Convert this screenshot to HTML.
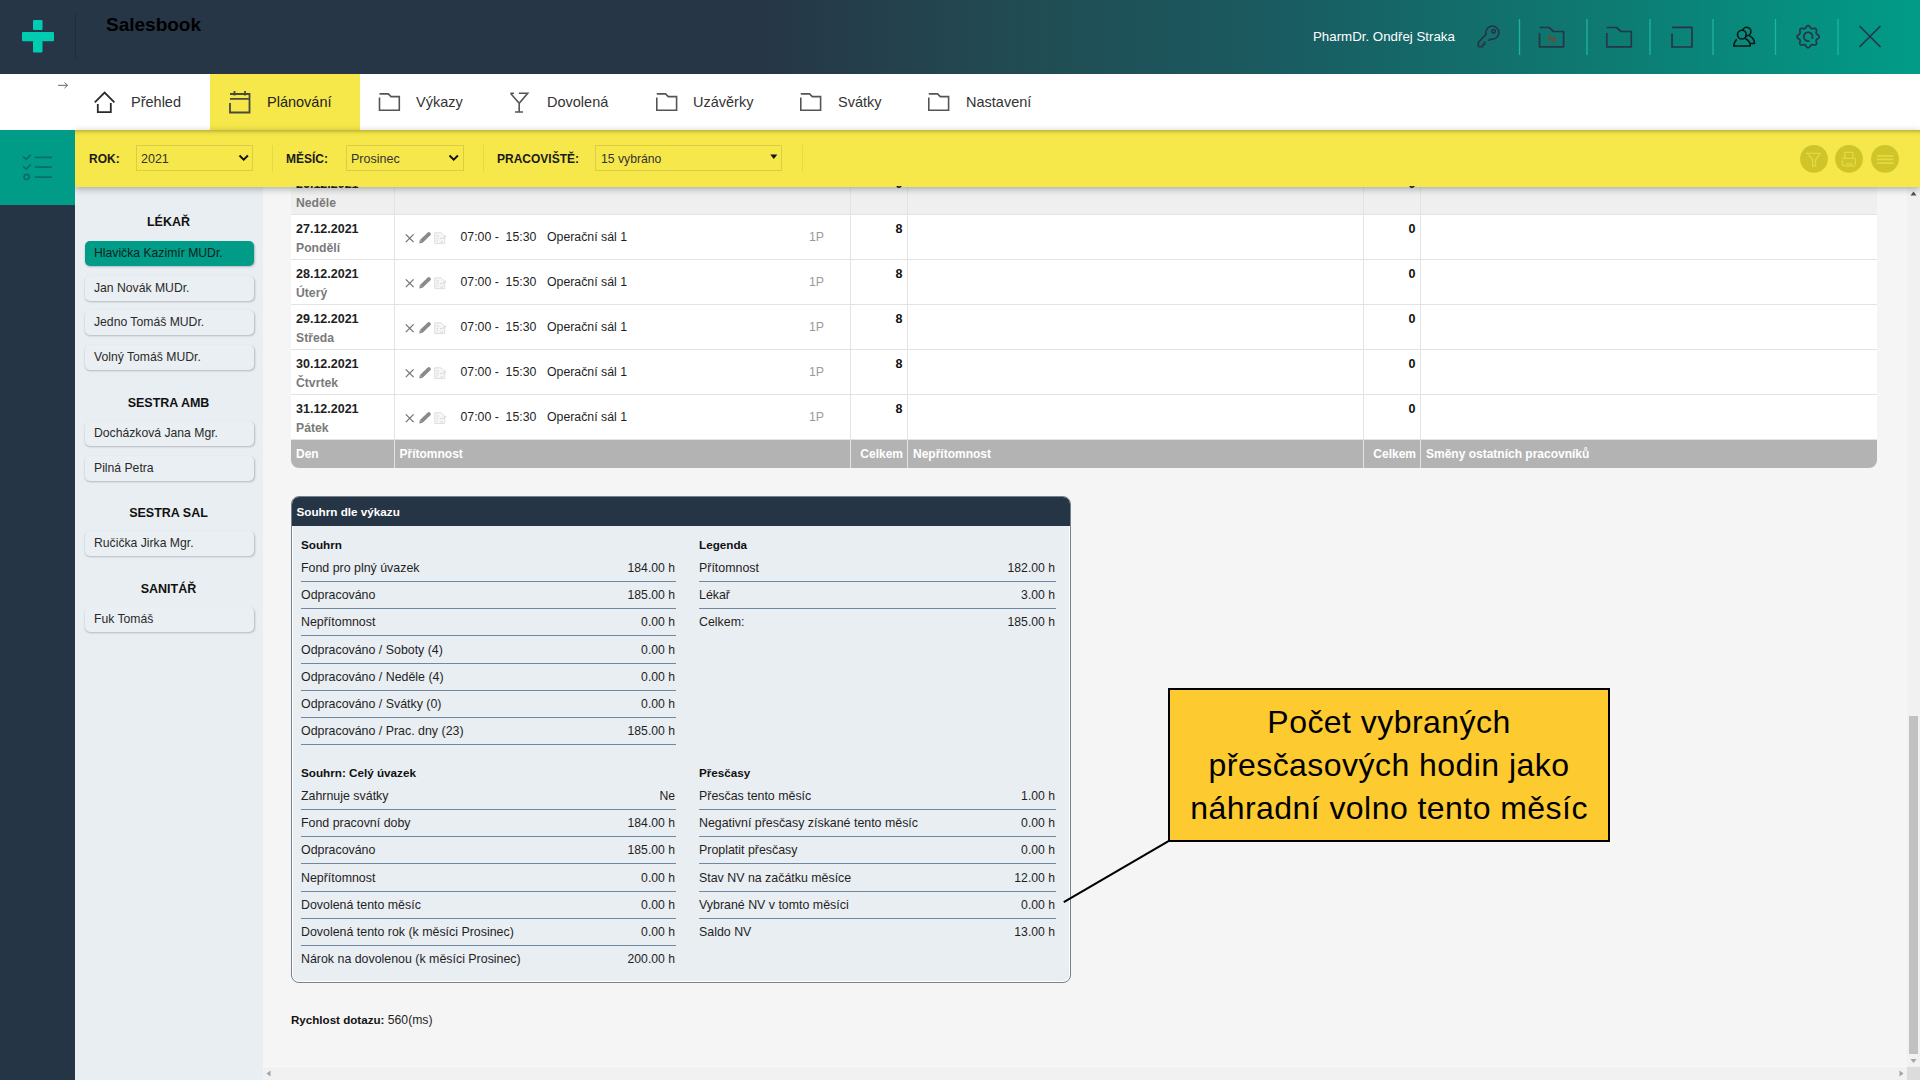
<!DOCTYPE html>
<html><head><meta charset="utf-8">
<style>
*{box-sizing:border-box;margin:0;padding:0}
html,body{width:1920px;height:1080px;overflow:hidden;background:#f5f5f5;font-family:"Liberation Sans",sans-serif;color:#222}
.abs{position:absolute}
#hdr{left:0;top:0;width:1920px;height:74px;background:linear-gradient(90deg,#263646 0%,#263646 39.6%,#224a52 52.1%,#195d62 67.7%,#0e7a72 83.3%,#019c88 100%)}
#nav{left:0;top:74px;width:1920px;height:56px;background:#fff}
#tb{left:75px;top:130px;width:1845px;height:57px;background:#f6e84a;box-shadow:0 2px 7px rgba(0,0,0,.3);z-index:5}
#teal{left:0;top:130px;width:75px;height:75px;background:#009c87;z-index:6}
#sdark{left:0;top:205px;width:75px;height:875px;background:#253545}
#slight{left:75px;top:187px;width:188px;height:893px;background:#e9eef2}
#content{left:263px;top:187px;width:1644px;height:880px;background:#f5f5f5}
.txt{position:absolute;white-space:nowrap}
.sh{position:absolute;left:75px;width:187px;text-align:center;font-size:12.5px;font-weight:bold;color:#111;line-height:16px}
.si{position:absolute;left:85px;width:169px;height:25px;border-radius:5px;background:#eaeff3;box-shadow:0.5px 1px 2px rgba(0,0,0,.22);font-size:12.2px;color:#2a2a2a;line-height:25px;padding-left:9px;white-space:nowrap}

.row{position:absolute;left:291px;width:1586px;height:45px;background:#fff;border-bottom:1px solid #e3e3e3}
.row.we{background:#efefef}
.vl{position:absolute;width:1px;background:#e3e3e3}
.dt{position:absolute;left:296px;font-size:12.5px;font-weight:bold;color:#1e1e1e;line-height:14px;white-space:nowrap}
.dn{position:absolute;left:296px;font-size:12.2px;font-weight:bold;color:#7a7a7a;line-height:14px;white-space:nowrap}
.tm{position:absolute;left:460.5px;font-size:12.3px;color:#1e1e1e;line-height:14px;white-space:pre}
.op{position:absolute;left:547px;font-size:12.3px;color:#1e1e1e;line-height:14px;white-space:nowrap}
.p1{position:absolute;left:809px;font-size:12.3px;color:#9a9a9a;line-height:14px}
.n8{position:absolute;width:40px;text-align:right;font-size:12.5px;font-weight:bold;color:#111;line-height:14px}
.ft{position:absolute;top:447px;font-size:12px;font-weight:bold;color:#fff;line-height:14px;white-space:nowrap}

.sbox{position:absolute;left:290.5px;top:496px;width:780px;height:486.5px;border:1.5px solid #75818c;border-radius:8px;background:#e9eef3;overflow:hidden;box-shadow:inset 0 0 0 1px #fff}
.shd{position:absolute;left:0;top:0;width:100%;height:29px;background:#263545}
.sl{position:absolute;font-size:12.4px;color:#1f1f1f;line-height:14px;white-space:nowrap}
.sv{position:absolute;font-size:12.2px;color:#1f1f1f;line-height:14px;white-space:nowrap;text-align:right;width:100px}
.sb{position:absolute;font-size:11.7px;font-weight:bold;color:#111;line-height:14px;white-space:nowrap}
.hl{position:absolute;height:1px;background:#7089a3}
.si.act{background:#009c87;color:#0c1f1c}

</style></head><body>
<div id="hdr" class="abs"></div>
<div id="nav" class="abs"></div>
<!-- header -->
<svg class="abs" style="left:0;top:0" width="75" height="74">
 <rect x="33" y="20" width="9.5" height="10" rx="1" fill="#00ccb2"/>
 <rect x="22" y="32" width="32" height="9.3" rx="1" fill="#00ccb2"/>
 <rect x="33" y="41" width="9.5" height="11.5" rx="1" fill="#00ccb2"/>
</svg>
<div class="abs" style="left:75px;top:13px;width:1px;height:47px;background:#1f2d3a"></div>
<div class="txt" style="left:106px;top:13px;font-size:19px;font-weight:bold;color:#000;line-height:24px">Salesbook</div>
<div class="txt" style="left:1313px;top:28px;font-size:13.3px;color:#fff;line-height:18px">PharmDr. Ondřej Straka</div>
<svg class="abs" style="left:1460px;top:0" width="460" height="74" fill="none" stroke="#263646" stroke-width="1.7" stroke-linecap="round" stroke-linejoin="round">
 <path d="M26.1 34.3 A6.5 6.5 0 1 1 31.3 39.0 L28.8 40.2"/>
 <circle cx="33.5" cy="31.2" r="1.7"/>
 <path d="M25.9 34.4 L18.3 42.4 L18.3 45.9 Q18.5 46.6 19.5 46.6 L22.6 46.6 L23 44.5 L24.6 44.3 L24.6 42"/>
 <g stroke="#1cb5a0" stroke-width="1.3" stroke-linecap="butt"><path d="M59.5 19V55M127 19V55M190 19V55M253 19V55M315.5 19V55M378 19V55"/></g>
 <path d="M79.5 27.5H89L93.5 31.5H103.6V46.8H79.5V33" stroke-linecap="butt"/>
 <path d="M89.6 41.7V35.9L94.3 41.7V35.9" stroke="#6e4a30" stroke-width="1.5" stroke-linejoin="miter"/>
 <path d="M146.8 27.5H156.5L161 31.5H171.3V46.8H146.8V33" stroke-linecap="butt"/>
 <path d="M212 27.3H232V47H212V33.5" stroke-linecap="butt"/>
 <g stroke="#0a1716" stroke-width="1.6">
  <circle cx="281.9" cy="34.6" r="4.4"/>
  <path d="M282.69 30.27 A4.2 4.2 0 1 1 286.17 35.67"/>
  <path d="M276.3 39.8 C274.5 41.5 273.8 43.5 273.8 46 L290.3 46 C290.3 42.5 288 40 285.7 38.8"/>
  <path d="M289.6 35.9 C292.5 37.5 294.5 40 294.5 43.5 L290.5 43.5"/>
 </g>
 <path d="M348.15 25.65 L348.58 25.71 L349.00 25.90 L349.39 26.20 L349.75 26.57 L350.08 26.99 L350.38 27.42 L350.65 27.82 L350.92 28.17 L351.20 28.44 L351.50 28.62 L351.84 28.70 L352.22 28.71 L352.66 28.65 L353.14 28.56 L353.65 28.47 L354.18 28.40 L354.70 28.39 L355.18 28.46 L355.61 28.63 L355.96 28.89 L356.22 29.24 L356.39 29.67 L356.46 30.15 L356.45 30.67 L356.38 31.20 L356.29 31.71 L356.20 32.19 L356.14 32.63 L356.15 33.01 L356.23 33.35 L356.41 33.65 L356.68 33.93 L357.03 34.20 L357.43 34.47 L357.86 34.77 L358.28 35.10 L358.65 35.46 L358.95 35.85 L359.14 36.27 L359.20 36.70 L359.14 37.13 L358.95 37.55 L358.65 37.94 L358.28 38.30 L357.86 38.63 L357.43 38.93 L357.03 39.20 L356.68 39.47 L356.41 39.75 L356.23 40.05 L356.15 40.39 L356.14 40.77 L356.20 41.21 L356.29 41.69 L356.38 42.20 L356.45 42.73 L356.46 43.25 L356.39 43.73 L356.22 44.16 L355.96 44.51 L355.61 44.77 L355.18 44.94 L354.70 45.01 L354.18 45.00 L353.65 44.93 L353.14 44.84 L352.66 44.75 L352.22 44.69 L351.84 44.70 L351.50 44.78 L351.20 44.96 L350.92 45.23 L350.65 45.58 L350.38 45.98 L350.08 46.41 L349.75 46.83 L349.39 47.20 L349.00 47.50 L348.58 47.69 L348.15 47.75 L347.72 47.69 L347.30 47.50 L346.91 47.20 L346.55 46.83 L346.22 46.41 L345.92 45.98 L345.65 45.58 L345.38 45.23 L345.10 44.96 L344.80 44.78 L344.46 44.70 L344.08 44.69 L343.64 44.75 L343.16 44.84 L342.65 44.93 L342.12 45.00 L341.60 45.01 L341.12 44.94 L340.69 44.77 L340.34 44.51 L340.08 44.16 L339.91 43.73 L339.84 43.25 L339.85 42.73 L339.92 42.20 L340.01 41.69 L340.10 41.21 L340.16 40.77 L340.15 40.39 L340.07 40.05 L339.89 39.75 L339.62 39.47 L339.27 39.20 L338.87 38.93 L338.44 38.63 L338.02 38.30 L337.65 37.94 L337.35 37.55 L337.16 37.13 L337.10 36.70 L337.16 36.27 L337.35 35.85 L337.65 35.46 L338.02 35.10 L338.44 34.77 L338.87 34.47 L339.27 34.20 L339.62 33.93 L339.89 33.65 L340.07 33.35 L340.15 33.01 L340.16 32.63 L340.10 32.19 L340.01 31.71 L339.92 31.20 L339.85 30.67 L339.84 30.15 L339.91 29.67 L340.08 29.24 L340.34 28.89 L340.69 28.63 L341.12 28.46 L341.60 28.39 L342.12 28.40 L342.65 28.47 L343.16 28.56 L343.64 28.65 L344.08 28.71 L344.46 28.70 L344.80 28.62 L345.10 28.44 L345.38 28.17 L345.65 27.82 L345.92 27.42 L346.22 26.99 L346.55 26.57 L346.91 26.20 L347.30 25.90 L347.72 25.71 L348.15 25.65Z"/>
 <path d="M352.3 38.2 A4.4 4.4 0 1 0 348.9 41.0"/>
 <path d="M400 26.5 L420 46.5 M420 26.5 L400 46.5"/>
</svg>


<!-- nav -->
<div class="abs" style="left:210px;top:74px;width:150px;height:56px;background:#f6e84a"></div>
<svg class="abs" style="left:0;top:74px" width="1100" height="56" fill="none" stroke-linecap="butt" stroke-linejoin="miter">
 <path d="M58 11.3H67.5M64.5 8.5L67.6 11.3L64.5 14.1" stroke="#666" stroke-width="1"/>
 <g stroke="#2a2a2a" stroke-width="1.8">
  <path d="M94.8 28.3L104.6 18.6L114.4 28.3M110.8 29V38.2H97.8V30"/>
 </g>
 <g stroke="#4a4a3a" stroke-width="1.8">
  <path d="M230 20H249.5V38.5H230V29M230 24.8H249.5M234.5 17V21.5M245 17V21.5"/>
 </g>
 <g stroke="#555" stroke-width="1.6">
  <path d="M379.5 19.9H388.3L391 22.6H399.3V36.2H379.5V23.5"/>
  <path d="M510.5 19.3H514M518.8 19.3H527.7L519.2 29.2L510.5 19.3M519.2 29.2V37.8M515 38H523"/>
  <path d="M656.8 19.9H665.6L668.3 22.6H676.6V36.2H656.8V23.5"/>
  <path d="M800.8 19.9H809.6L812.3 22.6H820.6V36.2H800.8V23.5"/>
  <path d="M928.8 19.9H937.6L940.3 22.6H948.6V36.2H928.8V23.5"/>
 </g>
</svg>
<div class="txt" style="left:131px;top:93px;font-size:14.5px;color:#333;line-height:18px">Přehled</div>
<div class="txt" style="left:267px;top:93px;font-size:14.5px;color:#222;line-height:18px">Plánování</div>
<div class="txt" style="left:416px;top:93px;font-size:14.5px;color:#333;line-height:18px">Výkazy</div>
<div class="txt" style="left:547px;top:93px;font-size:14.5px;color:#333;line-height:18px">Dovolená</div>
<div class="txt" style="left:693px;top:93px;font-size:14.5px;color:#333;line-height:18px">Uzávěrky</div>
<div class="txt" style="left:838px;top:93px;font-size:14.5px;color:#333;line-height:18px">Svátky</div>
<div class="txt" style="left:966px;top:93px;font-size:14.5px;color:#333;line-height:18px">Nastavení</div>
<div id="tb" class="abs"></div>
<div id="teal" class="abs"></div>

<!-- toolbar -->
<svg class="abs" style="left:0;top:130px;z-index:7" width="75" height="75" fill="none" stroke="#0c6d65" stroke-width="1.7" stroke-linecap="round" stroke-linejoin="round">
 <path d="M23.75 27.1L26.25 29.4L30.4 25.2M23.75 36.9L26.25 39.2L30.4 35M35.6 27.3H51.3M35.6 37.1H51.3M35.6 47.1H51.3"/>
 <circle cx="26.7" cy="46.9" r="2.6"/>
</svg>
<div class="abs" style="left:75px;top:130px;width:1845px;height:57px;z-index:7">
 <div class="txt" style="left:14px;top:21px;font-size:12px;font-weight:bold;color:#1a1a1a;line-height:16px">ROK:</div>
 <div class="abs" style="left:61px;top:15px;width:117px;height:26px;border:1px solid #d9ce45"></div>
 <div class="txt" style="left:66px;top:21px;font-size:12.5px;color:#333;line-height:16px">2021</div>
 <svg class="abs" style="left:163px;top:24px" width="12" height="8" fill="none" stroke="#111" stroke-width="1.9"><path d="M1.5 1.5L5.7 5.7L9.9 1.5"/></svg>
 <div class="abs" style="left:197px;top:15px;width:1px;height:27px;background:#e6d946"></div>
 <div class="txt" style="left:211px;top:21px;font-size:12px;font-weight:bold;color:#1a1a1a;line-height:16px">MĚSÍC:</div>
 <div class="abs" style="left:271px;top:15px;width:118px;height:26px;border:1px solid #d9ce45"></div>
 <div class="txt" style="left:276px;top:21px;font-size:12.5px;color:#333;line-height:16px">Prosinec</div>
 <svg class="abs" style="left:373px;top:24px" width="12" height="8" fill="none" stroke="#111" stroke-width="1.9"><path d="M1.5 1.5L5.7 5.7L9.9 1.5"/></svg>
 <div class="abs" style="left:408px;top:15px;width:1px;height:27px;background:#e6d946"></div>
 <div class="txt" style="left:422px;top:21px;font-size:12px;font-weight:bold;color:#1a1a1a;line-height:16px">PRACOVIŠTĚ:</div>
 <div class="abs" style="left:520px;top:15px;width:187px;height:26px;border:1px solid #d9ce45"></div>
 <div class="txt" style="left:526px;top:21px;font-size:12.2px;color:#333;line-height:16px">15 vybráno</div>
 <svg class="abs" style="left:695px;top:24px" width="8" height="6"><path d="M0.3 0.5H7.3L3.8 5Z" fill="#111"/></svg>
 <div class="abs" style="left:727px;top:15px;width:1px;height:27px;background:#e6d946"></div>
</div>
<svg class="abs" style="left:1790px;top:130px;z-index:7" width="130" height="57">
 <g fill="#cfc42a"><circle cx="24" cy="28.9" r="13.9"/><circle cx="59" cy="28.9" r="13.9"/><circle cx="95" cy="28.9" r="13.9"/></g>
 <g fill="none" stroke="#e4da3e" stroke-width="1.3" stroke-linejoin="round" stroke-linecap="round">
  <path d="M16.5 23.4H30.4L25.6 29.5V35.4L22.6 36.6V29.5L18.7 25"/>
  <path d="M54.8 28.5V22.3H62.9V28.5M52.5 28.3H65.4V34.3M52.3 30.6V34.3Q52.3 35.8 55 35.8H64.5M56.2 33.9H62"/>
  <path d="M87 25.9H103.4M87 29.4H103.4M87 33.1H103.4" stroke-linecap="butt" stroke-width="1.7"/>
 </g>
</svg>
<div class="abs" style="left:75px;top:130px;width:1845px;height:6px;background:linear-gradient(rgba(70,60,0,.3),rgba(70,60,0,.08) 50%,rgba(70,60,0,0));z-index:8"></div>
<div id="sdark" class="abs"></div>
<div id="slight" class="abs"></div>
<div id="content" class="abs"></div>

<!-- table -->
<div class="row we" style="top:170px;height:45px"></div>
<div class="abs" style="left:0;top:186px;width:1920px;height:2px;overflow:hidden;z-index:9"><div class="dt" style="top:-9px">26.12.2021</div><div class="n8" style="left:862.5px;top:-9px">0</div><div class="n8" style="left:1375.5px;top:-9px">0</div></div>
<div class="dn" style="top:196px">Neděle</div>

<div class="row" style="top:215px"></div>
<div class="dt" style="top:222px">27.12.2021</div>
<div class="dn" style="top:241px">Pondělí</div>
<svg class="abs" style="left:403px;top:232px" width="46" height="14" fill="none">
 <path d="M2.8 2.4L10.6 10.1M10.6 2.4L2.8 10.1" stroke="#747474" stroke-width="1.3"/>
 <path d="M18.3 9.4L23.7 4.15" stroke="#8a8a8a" stroke-width="3.9"/>
 <path d="M16.2 11.6L16.9 8.0L19.7 10.8Z" fill="#8a8a8a"/>
 <path d="M24.6 3.2L25.8 2.1" stroke="#8a8a8a" stroke-width="3.9" stroke-linecap="round"/>
 <path d="M31.7 0.8H38.2L41.7 4.3V11.6H31.7Z" fill="#f6f6f6" stroke="#dedede" stroke-width="1"/>
 <path d="M33.5 4H36M33.5 6.5H35M33.5 9H35M36.8 6.5H39M37.5 10H40" stroke="#d2d2d2" stroke-width="0.9"/>
 <path d="M40 6.5L43 4" stroke="#d8d8d8" stroke-width="1.1"/>
</svg>
<div class="tm" style="top:230px">07:00 -  15:30</div>
<div class="op" style="top:230px">Operační sál 1</div>
<div class="p1" style="top:230px">1P</div>
<div class="n8" style="left:862.5px;top:222px">8</div>
<div class="n8" style="left:1375.5px;top:222px">0</div>
<div class="row" style="top:260px"></div>
<div class="dt" style="top:267px">28.12.2021</div>
<div class="dn" style="top:286px">Úterý</div>
<svg class="abs" style="left:403px;top:277px" width="46" height="14" fill="none">
 <path d="M2.8 2.4L10.6 10.1M10.6 2.4L2.8 10.1" stroke="#747474" stroke-width="1.3"/>
 <path d="M18.3 9.4L23.7 4.15" stroke="#8a8a8a" stroke-width="3.9"/>
 <path d="M16.2 11.6L16.9 8.0L19.7 10.8Z" fill="#8a8a8a"/>
 <path d="M24.6 3.2L25.8 2.1" stroke="#8a8a8a" stroke-width="3.9" stroke-linecap="round"/>
 <path d="M31.7 0.8H38.2L41.7 4.3V11.6H31.7Z" fill="#f6f6f6" stroke="#dedede" stroke-width="1"/>
 <path d="M33.5 4H36M33.5 6.5H35M33.5 9H35M36.8 6.5H39M37.5 10H40" stroke="#d2d2d2" stroke-width="0.9"/>
 <path d="M40 6.5L43 4" stroke="#d8d8d8" stroke-width="1.1"/>
</svg>
<div class="tm" style="top:275px">07:00 -  15:30</div>
<div class="op" style="top:275px">Operační sál 1</div>
<div class="p1" style="top:275px">1P</div>
<div class="n8" style="left:862.5px;top:267px">8</div>
<div class="n8" style="left:1375.5px;top:267px">0</div>
<div class="row" style="top:305px"></div>
<div class="dt" style="top:312px">29.12.2021</div>
<div class="dn" style="top:331px">Středa</div>
<svg class="abs" style="left:403px;top:322px" width="46" height="14" fill="none">
 <path d="M2.8 2.4L10.6 10.1M10.6 2.4L2.8 10.1" stroke="#747474" stroke-width="1.3"/>
 <path d="M18.3 9.4L23.7 4.15" stroke="#8a8a8a" stroke-width="3.9"/>
 <path d="M16.2 11.6L16.9 8.0L19.7 10.8Z" fill="#8a8a8a"/>
 <path d="M24.6 3.2L25.8 2.1" stroke="#8a8a8a" stroke-width="3.9" stroke-linecap="round"/>
 <path d="M31.7 0.8H38.2L41.7 4.3V11.6H31.7Z" fill="#f6f6f6" stroke="#dedede" stroke-width="1"/>
 <path d="M33.5 4H36M33.5 6.5H35M33.5 9H35M36.8 6.5H39M37.5 10H40" stroke="#d2d2d2" stroke-width="0.9"/>
 <path d="M40 6.5L43 4" stroke="#d8d8d8" stroke-width="1.1"/>
</svg>
<div class="tm" style="top:320px">07:00 -  15:30</div>
<div class="op" style="top:320px">Operační sál 1</div>
<div class="p1" style="top:320px">1P</div>
<div class="n8" style="left:862.5px;top:312px">8</div>
<div class="n8" style="left:1375.5px;top:312px">0</div>
<div class="row" style="top:350px"></div>
<div class="dt" style="top:357px">30.12.2021</div>
<div class="dn" style="top:376px">Čtvrtek</div>
<svg class="abs" style="left:403px;top:367px" width="46" height="14" fill="none">
 <path d="M2.8 2.4L10.6 10.1M10.6 2.4L2.8 10.1" stroke="#747474" stroke-width="1.3"/>
 <path d="M18.3 9.4L23.7 4.15" stroke="#8a8a8a" stroke-width="3.9"/>
 <path d="M16.2 11.6L16.9 8.0L19.7 10.8Z" fill="#8a8a8a"/>
 <path d="M24.6 3.2L25.8 2.1" stroke="#8a8a8a" stroke-width="3.9" stroke-linecap="round"/>
 <path d="M31.7 0.8H38.2L41.7 4.3V11.6H31.7Z" fill="#f6f6f6" stroke="#dedede" stroke-width="1"/>
 <path d="M33.5 4H36M33.5 6.5H35M33.5 9H35M36.8 6.5H39M37.5 10H40" stroke="#d2d2d2" stroke-width="0.9"/>
 <path d="M40 6.5L43 4" stroke="#d8d8d8" stroke-width="1.1"/>
</svg>
<div class="tm" style="top:365px">07:00 -  15:30</div>
<div class="op" style="top:365px">Operační sál 1</div>
<div class="p1" style="top:365px">1P</div>
<div class="n8" style="left:862.5px;top:357px">8</div>
<div class="n8" style="left:1375.5px;top:357px">0</div>
<div class="row" style="top:395px"></div>
<div class="dt" style="top:402px">31.12.2021</div>
<div class="dn" style="top:421px">Pátek</div>
<svg class="abs" style="left:403px;top:412px" width="46" height="14" fill="none">
 <path d="M2.8 2.4L10.6 10.1M10.6 2.4L2.8 10.1" stroke="#747474" stroke-width="1.3"/>
 <path d="M18.3 9.4L23.7 4.15" stroke="#8a8a8a" stroke-width="3.9"/>
 <path d="M16.2 11.6L16.9 8.0L19.7 10.8Z" fill="#8a8a8a"/>
 <path d="M24.6 3.2L25.8 2.1" stroke="#8a8a8a" stroke-width="3.9" stroke-linecap="round"/>
 <path d="M31.7 0.8H38.2L41.7 4.3V11.6H31.7Z" fill="#f6f6f6" stroke="#dedede" stroke-width="1"/>
 <path d="M33.5 4H36M33.5 6.5H35M33.5 9H35M36.8 6.5H39M37.5 10H40" stroke="#d2d2d2" stroke-width="0.9"/>
 <path d="M40 6.5L43 4" stroke="#d8d8d8" stroke-width="1.1"/>
</svg>
<div class="tm" style="top:410px">07:00 -  15:30</div>
<div class="op" style="top:410px">Operační sál 1</div>
<div class="p1" style="top:410px">1P</div>
<div class="n8" style="left:862.5px;top:402px">8</div>
<div class="n8" style="left:1375.5px;top:402px">0</div>
<div class="abs" style="left:291px;top:440px;width:1586px;height:28px;background:#b3b3b3;border-radius:0 0 8px 8px"></div>
<div class="vl" style="left:394px;top:170px;height:298px"></div>
<div class="vl" style="left:850px;top:170px;height:298px"></div>
<div class="vl" style="left:907px;top:170px;height:298px"></div>
<div class="vl" style="left:1363px;top:170px;height:298px"></div>
<div class="vl" style="left:1420px;top:170px;height:298px"></div>
<div class="ft" style="left:296px">Den</div>
<div class="ft" style="left:399.5px">Přítomnost</div>
<div class="ft" style="left:850px;width:53px;text-align:right">Celkem</div>
<div class="ft" style="left:913px">Nepřítomnost</div>
<div class="ft" style="left:1363px;width:53px;text-align:right">Celkem</div>
<div class="ft" style="left:1426px">Směny ostatních pracovníků</div>

<!-- summary -->
<div class="sbox"><div class="shd"></div></div>
<div class="sb" style="left:296.5px;top:504.5px;color:#fff;font-size:11.7px">Souhrn dle výkazu</div>
<div class="sb" style="left:301px;top:538px">Souhrn</div>
<div class="sl" style="left:301px;top:561.0px">Fond pro plný úvazek</div>
<div class="sv" style="left:575px;top:561.0px">184.00 h</div>
<div class="hl" style="left:301px;top:581.0px;width:375px"></div>
<div class="sl" style="left:301px;top:588.2px">Odpracováno</div>
<div class="sv" style="left:575px;top:588.2px">185.00 h</div>
<div class="hl" style="left:301px;top:608.2px;width:375px"></div>
<div class="sl" style="left:301px;top:615.4px">Nepřítomnost</div>
<div class="sv" style="left:575px;top:615.4px">0.00 h</div>
<div class="hl" style="left:301px;top:635.4px;width:375px"></div>
<div class="sl" style="left:301px;top:642.6px">Odpracováno / Soboty (4)</div>
<div class="sv" style="left:575px;top:642.6px">0.00 h</div>
<div class="hl" style="left:301px;top:662.6px;width:375px"></div>
<div class="sl" style="left:301px;top:669.8px">Odpracováno / Neděle (4)</div>
<div class="sv" style="left:575px;top:669.8px">0.00 h</div>
<div class="hl" style="left:301px;top:689.8px;width:375px"></div>
<div class="sl" style="left:301px;top:697.0px">Odpracováno / Svátky (0)</div>
<div class="sv" style="left:575px;top:697.0px">0.00 h</div>
<div class="hl" style="left:301px;top:717.0px;width:375px"></div>
<div class="sl" style="left:301px;top:724.2px">Odpracováno / Prac. dny (23)</div>
<div class="sv" style="left:575px;top:724.2px">185.00 h</div>
<div class="hl" style="left:301px;top:744.2px;width:375px"></div>
<div class="sb" style="left:699px;top:538px">Legenda</div>
<div class="sl" style="left:699px;top:561.0px">Přítomnost</div>
<div class="sv" style="left:955px;top:561.0px">182.00 h</div>
<div class="hl" style="left:699px;top:581.0px;width:357px"></div>
<div class="sl" style="left:699px;top:588.2px">Lékař</div>
<div class="sv" style="left:955px;top:588.2px">3.00 h</div>
<div class="hl" style="left:699px;top:608.2px;width:357px"></div>
<div class="sl" style="left:699px;top:615.4px">Celkem:</div>
<div class="sv" style="left:955px;top:615.4px">185.00 h</div>
<div class="sb" style="left:301px;top:766px">Souhrn: Celý úvazek</div>
<div class="sl" style="left:301px;top:789.0px">Zahrnuje svátky</div>
<div class="sv" style="left:575px;top:789.0px">Ne</div>
<div class="hl" style="left:301px;top:809.0px;width:375px"></div>
<div class="sl" style="left:301px;top:816.2px">Fond pracovní doby</div>
<div class="sv" style="left:575px;top:816.2px">184.00 h</div>
<div class="hl" style="left:301px;top:836.2px;width:375px"></div>
<div class="sl" style="left:301px;top:843.4px">Odpracováno</div>
<div class="sv" style="left:575px;top:843.4px">185.00 h</div>
<div class="hl" style="left:301px;top:863.4px;width:375px"></div>
<div class="sl" style="left:301px;top:870.6px">Nepřítomnost</div>
<div class="sv" style="left:575px;top:870.6px">0.00 h</div>
<div class="hl" style="left:301px;top:890.6px;width:375px"></div>
<div class="sl" style="left:301px;top:897.8px">Dovolená tento měsíc</div>
<div class="sv" style="left:575px;top:897.8px">0.00 h</div>
<div class="hl" style="left:301px;top:917.8px;width:375px"></div>
<div class="sl" style="left:301px;top:925.0px">Dovolená tento rok (k měsíci Prosinec)</div>
<div class="sv" style="left:575px;top:925.0px">0.00 h</div>
<div class="hl" style="left:301px;top:945.0px;width:375px"></div>
<div class="sl" style="left:301px;top:952.2px">Nárok na dovolenou (k měsíci Prosinec)</div>
<div class="sv" style="left:575px;top:952.2px">200.00 h</div>
<div class="sb" style="left:699px;top:766px">Přesčasy</div>
<div class="sl" style="left:699px;top:789.0px">Přesčas tento měsíc</div>
<div class="sv" style="left:955px;top:789.0px">1.00 h</div>
<div class="hl" style="left:699px;top:809.0px;width:357px"></div>
<div class="sl" style="left:699px;top:816.2px">Negativní přesčasy získané tento měsíc</div>
<div class="sv" style="left:955px;top:816.2px">0.00 h</div>
<div class="hl" style="left:699px;top:836.2px;width:357px"></div>
<div class="sl" style="left:699px;top:843.4px">Proplatit přesčasy</div>
<div class="sv" style="left:955px;top:843.4px">0.00 h</div>
<div class="hl" style="left:699px;top:863.4px;width:357px"></div>
<div class="sl" style="left:699px;top:870.6px">Stav NV na začátku měsíce</div>
<div class="sv" style="left:955px;top:870.6px">12.00 h</div>
<div class="hl" style="left:699px;top:890.6px;width:357px"></div>
<div class="sl" style="left:699px;top:897.8px">Vybrané NV v tomto měsíci</div>
<div class="sv" style="left:955px;top:897.8px">0.00 h</div>
<div class="hl" style="left:699px;top:917.8px;width:357px"></div>
<div class="sl" style="left:699px;top:925.0px">Saldo NV</div>
<div class="sv" style="left:955px;top:925.0px">13.00 h</div>
<div class="txt" style="left:291px;top:1013px;font-size:12.2px;line-height:14px;color:#1f1f1f"><b style="color:#111;font-size:11.6px">Rychlost dotazu:</b> 560(ms)</div>
<!-- sidebar -->
<div class="sh" style="top:214px">LÉKAŘ</div>
<div class="si act" style="top:241px">Hlavička Kazimír MUDr.</div>
<div class="si" style="top:275.5px">Jan Novák MUDr.</div>
<div class="si" style="top:310px">Jedno Tomáš MUDr.</div>
<div class="si" style="top:345px">Volný Tomáš MUDr.</div>
<div class="sh" style="top:394.5px">SESTRA AMB</div>
<div class="si" style="top:421px">Docházková Jana Mgr.</div>
<div class="si" style="top:455.5px">Pilná Petra</div>
<div class="sh" style="top:504.5px">SESTRA SAL</div>
<div class="si" style="top:531px">Ručička Jirka Mgr.</div>
<div class="sh" style="top:580.5px">SANITÁŘ</div>
<div class="si" style="top:606.5px">Fuk Tomáš</div>


<!-- callout -->
<svg class="abs" style="left:1050px;top:830px" width="130" height="80"><path d="M13.8 72.2L118.5 11.1" stroke="#000" stroke-width="2.1"/></svg>
<div class="abs" style="left:1168px;top:688px;width:442px;height:154px;border:2px solid #000;background:#fdca2f"></div>
<div class="abs" style="left:1168px;top:701px;width:442px;text-align:center;font-size:32px;line-height:43px;letter-spacing:0.45px;color:#000">Počet vybraných<br>přesčasových hodin jako<br>náhradní volno tento měsíc</div>
<!-- scrollbars -->
<div class="abs" style="left:1907px;top:187px;width:13px;height:880px;background:#f1f1f1"></div>
<div class="abs" style="left:1909px;top:716px;width:9px;height:338px;background:#c1c1c1"></div>
<svg class="abs" style="left:1907px;top:187px" width="13" height="12"><path d="M3.5 8.5H9.5L6.5 4.5Z" fill="#505050"/></svg>
<svg class="abs" style="left:1907px;top:1055px" width="13" height="12"><path d="M3.5 4H9.5L6.5 8Z" fill="#a3a3a3"/></svg>
<div class="abs" style="left:263px;top:1066px;width:1644px;height:1px;background:#fbfbfb"></div>
<div class="abs" style="left:263px;top:1067px;width:1644px;height:13px;background:#f1f1f1"></div>
<div class="abs" style="left:1907px;top:1067px;width:13px;height:13px;background:#dcdcdc"></div>
<svg class="abs" style="left:262px;top:1067px" width="12" height="13"><path d="M8.5 3.5V9.5L4.5 6.5Z" fill="#a3a3a3"/></svg>
<svg class="abs" style="left:1895px;top:1067px" width="12" height="13"><path d="M4.5 3.5V9.5L8.5 6.5Z" fill="#a3a3a3"/></svg>
</body></html>
